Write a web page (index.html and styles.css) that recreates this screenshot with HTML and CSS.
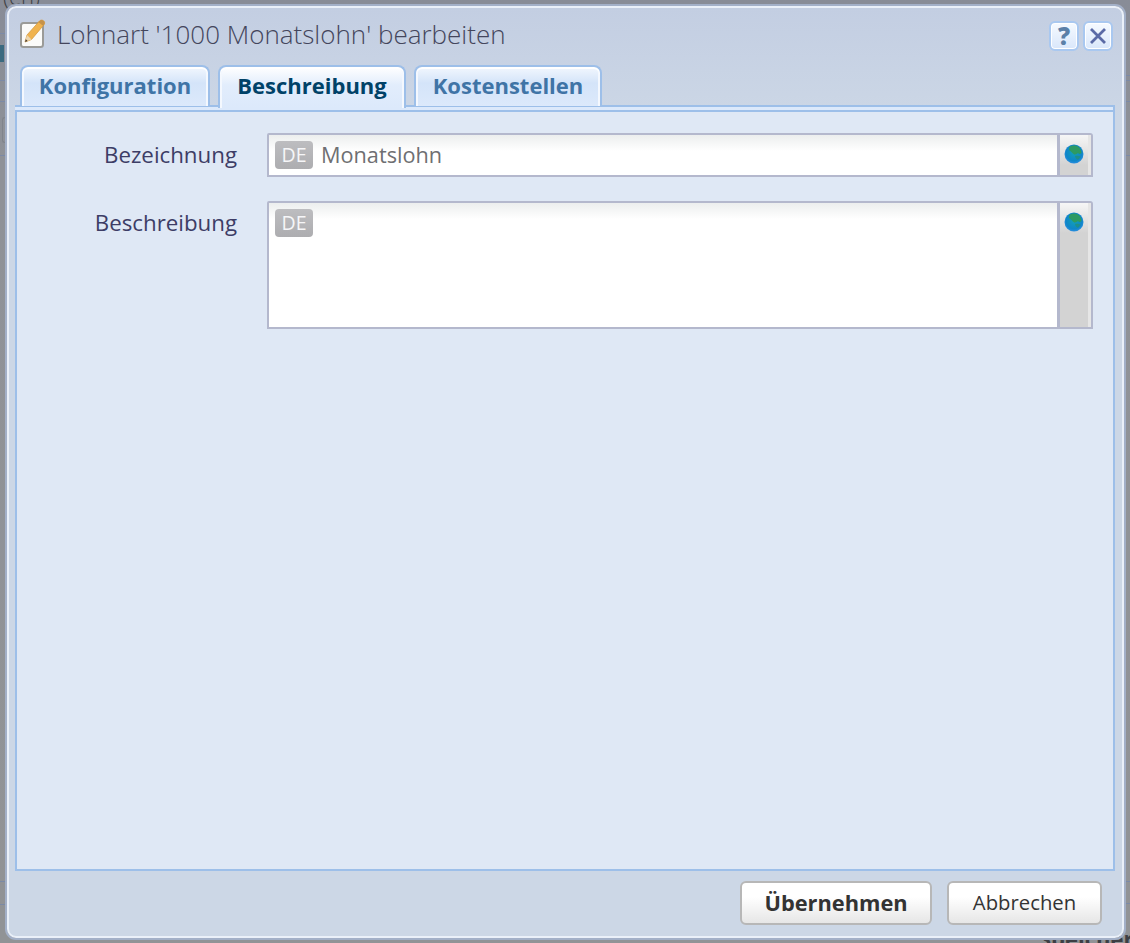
FILE: index.html
```html
<!DOCTYPE html>
<html lang="de">
<head>
<meta charset="utf-8">
<title>Lohnart bearbeiten</title>
<link rel="stylesheet" href="styles.css">
</head>
<body>
<div class="backdrop" aria-hidden="true">
  <span class="bg-text bg-top">(en)</span>
  <span class="bg-text bg-bottom">Speicher</span>
  <i class="bg-chip"></i><i class="bg-box"></i>
  <i class="bg-line l1"></i><i class="bg-line l2"></i><i class="bg-line l3"></i><i class="bg-line l4"></i><i class="bg-line l5"></i><i class="bg-line l6"></i>
  <i class="bg-line r1"></i><i class="bg-line r2"></i><i class="bg-line r3"></i><i class="bg-line r4"></i><i class="bg-line r5"></i><i class="bg-line r6"></i>
</div>
<div class="dialog">
  <header class="titlebar">
    <svg class="title-icon" width="28" height="32" viewBox="0 0 28 32">
      <rect x="2" y="6" width="22" height="24" rx="2.500" fill="#fbfbf9" stroke="#9b9b98" stroke-width="2"/>
      <path d="M6 25l2-7L20.500 4c1-1 2.600-1.300 4-.2 1.300 1 1.500 2.700.5 3.900L12.500 22.500z" fill="#f0b34e" stroke="#d59a40" stroke-width=".8"/>
      <path d="M20.500 4c1-1 2.600-1.300 4-.2 1.300 1 1.500 2.700.5 3.900l-1 1.100-4.800-3.700z" fill="#c6924a"/>
      <path d="M6 25l2-7 4.500 4.500z" fill="#ecd7b0"/>
      <path d="M6 25l.8-2.800 1.900 1.700z" fill="#4a3a2a"/>
    </svg>
    <h1 class="title">Lohnart '1000 Monatslohn' bearbeiten</h1>
    <div class="title-buttons">
      <button class="tool-btn tool-help" type="button">?</button>
      <button class="tool-btn" type="button" aria-label="Schließen">
        <svg width="20" height="20" viewBox="0 0 20 20"><path d="M3 3l14 14M17 3L3 17" stroke="#5a6aa6" stroke-width="2.800" fill="none"/></svg>
      </button>
    </div>
  </header>
  <nav class="tabs">
    <span class="tab">Konfiguration</span>
    <span class="tab tab-active">Beschreibung</span>
    <span class="tab">Kostenstellen</span>
  </nav>
  <main class="panel">
    <div class="panel-body">
      <div class="row">
        <label class="label">Bezeichnung</label>
        <div class="field field-single">
          <div class="field-input"><span class="lang">DE</span><span class="value">Monatslohn</span></div>
          <div class="field-side">
            <svg class="globe" width="20" height="20" viewBox="0 0 20 20"><use href="#globe"/></svg>
          </div>
        </div>
      </div>
      <div class="row">
        <label class="label">Beschreibung</label>
        <div class="field field-multi">
          <div class="field-input"><span class="lang">DE</span></div>
          <div class="field-side">
            <svg class="globe" width="20" height="20" viewBox="0 0 20 20"><use href="#globe"/></svg>
          </div>
        </div>
      </div>
    </div>
  </main>
  <footer class="actions">
    <button class="btn btn-primary" type="button">Übernehmen</button>
    <button class="btn btn-cancel" type="button">Abbrechen</button>
  </footer>
</div>
<svg width="0" height="0" class="defs">
  <defs>
    <radialGradient id="sea" cx="50%" cy="45%" r="55%">
      <stop offset="0" stop-color="#12a0b8"/><stop offset=".75" stop-color="#0f86c8"/><stop offset="1" stop-color="#2a8ee0"/>
    </radialGradient>
    <symbol id="globe" viewBox="0 0 20 20">
      <circle cx="10" cy="10" r="9.500" fill="url(#sea)"/>
      <path d="M6 2.500c3-1.500 7-1 9 .8 1.700 1.500 2.500 3.700 2.500 5.700-1.500 1-2 1.500-3.500 0-1.500 1.500-3 2-4.500 1C8 9 7 7 5 6c0-1.500.2-2.700 1-3.500z" fill="#2d9a62"/>
      <path d="M11 12c2-.5 4-.2 5.500.5-.6 1.600-1.800 2.700-3 3.200-1.300-.8-2.300-2-2.500-3.700z" fill="#1f8f8a"/>
    </symbol>
  </defs>
</svg>
</body>
</html>
```

FILE: styles.css
```css
* { box-sizing: border-box; }
html, body { margin: 0; padding: 0; }
body {
  position: relative;
  width: 1130px;
  height: 943px;
  overflow: hidden;
  background: linear-gradient(#888c97 0, #8f9298 160px, #919396 100%);
  font-family: "Open Sans", "Noto Sans", sans-serif;
  padding: 6px 6px 5px 7px;
}
.defs { position: absolute; }
.backdrop { position: absolute; inset: 0; }
.bg-text { position: absolute; color: #3d3f44; font-size: 22px; }
.bg-top { left: 3px; top: -19px; font-weight: 300; }
.bg-bottom { left: 1039px; top: 923px; font-weight: 700; }
.bg-chip { position: absolute; left: 0; top: 45px; width: 4px; height: 17px; background: #3b6a80; }
.bg-box { position: absolute; left: 2px; top: 117px; width: 3px; height: 26px; border: 1px solid #80848c; border-right: 0; border-radius: 3px 0 0 3px; }
.bg-line { position: absolute; height: 1px; background: #7c8aa6; }
.l1, .l2, .l3, .l4, .l5, .l6 { left: 0; width: 6px; }
.r1, .r2, .r3, .r4, .r5, .r6 { left: 1125px; width: 5px; }
.l1 { top: 33px; } .l2 { top: 80px; } .l3 { top: 101px; } .l4 { top: 155px; } .l5 { top: 881px; } .l6 { top: 904px; }
.r1 { top: 75px; } .r2 { top: 80px; } .r3 { top: 101px; } .r4 { top: 155px; } .r5 { top: 881px; } .r6 { top: 903px; }

.dialog {
  position: relative;
  height: 932px;
  display: flex;
  flex-direction: column;
  padding: 0 8px;
  border: 2px solid #eaf0f9;
  border-radius: 9px;
  box-shadow: 0 0 0 2px #a3b0c8;
  background: linear-gradient(#c3cee2 0, #ccd7e6 110px, #ccd7e6 100%);
}
.titlebar {
  height: 57px;
  flex: none;
  display: flex;
  align-items: flex-start;
}
.title-icon { margin: 9px 0 0 2px; flex: none; }
.title {
  margin: 8px 0 0 10px;
  font-size: 26px;
  line-height: 36px;
  font-weight: 300;
  color: #44465c;
  white-space: nowrap;
}
.title-buttons { margin: 13px 1px 0 auto; display: flex; gap: 4px; }
.tool-btn {
  width: 30px;
  height: 30px;
  padding: 0;
  display: flex;
  align-items: center;
  justify-content: center;
  border: 2px solid #a9c8f0;
  border-radius: 6px;
  background: linear-gradient(#f6faff, #d9e7fb);
  box-shadow: inset 0 0 0 1px #ffffff;
  font-family: "Open Sans", sans-serif;
  font-weight: 800;
  font-size: 24px;
  line-height: 1;
  color: #5b80a8;
}

.tabs {
  flex: none;
  height: 41px;
  display: flex;
  gap: 8px;
  padding-left: 3px;
  position: relative;
  z-index: 1;
}
.tab {
  width: 190px;
  height: 41px;
  border: 2px solid #9dbfe9;
  border-bottom: 0;
  border-radius: 8px 8px 0 0;
  box-shadow: inset 0 2px 0 #ffffff, inset 2px 0 0 #f4f8fe, inset -2px 0 0 #f4f8fe;
  background: linear-gradient(#f2f7fe 0, #d4e4f9 16px, #dce9fb 100%);
  display: flex;
  align-items: center;
  justify-content: center;
  font-size: 22px;
  font-weight: 700;
  color: #3f74a6;
  padding-bottom: 3px;
}
.tab-active {
  width: 188px;
  background: linear-gradient(#ffffff 0, #e2edfc 18px, #dce9fb 100%);
  color: #004268;
  height: 43px;
  margin-bottom: -2px;
  padding-bottom: 5px;
}
.tab:last-child { width: 188px; }

.panel {
  flex: 1;
  margin: -1px -1px 0 -2px;
  border: 2px solid #9dbfe9;
  border-bottom: 0;
  border-left: 0;
  padding-top: 3px;
  background: #dce9fb;
  display: flex;
  min-height: 0;
}
.panel-body {
  flex: 1;
  border: 2px solid #9dbfe9;
  border-right: 0;
  background: #dfe8f5;
  padding: 21px 20px 0 0;
  display: flex;
  flex-direction: column;
  gap: 24px;
}
.row { display: flex; align-items: flex-start; }
.label {
  width: 220px;
  flex: none;
  text-align: right;
  font-size: 22.300px;
  line-height: 44px;
  color: #3d3d66;
}
.field {
  margin-left: 30px;
  flex: 1;
  display: flex;
  border: 2px solid #b4b8cd;
  background: #fff;
  border-radius: 2px 3px 0 0;
}
.field-single { height: 44px; }
.field-multi { height: 128px; }
.field-input {
  flex: 1;
  display: flex;
  align-items: flex-start;
  padding: 6px 0 0 6px;
  background: linear-gradient(#eceeee 0, #ffffff 16px);
}
.lang {
  width: 38px;
  height: 28px;
  border-radius: 4px;
  background: linear-gradient(#bdbdc0, #adadb0);
  color: #f6f6f8;
  font-size: 19.500px;
  line-height: 28px;
  text-align: center;
}
.value {
  margin-left: 8px;
  font-size: 21.700px;
  line-height: 28px;
  color: #6f6f72;
}
.field-side {
  width: 34px;
  flex: none;
  border-left: 3px solid #b4b8cd;
  background: linear-gradient(#f6f6f6 0, #d3d3d3 30px, #d3d3d3 100%);
  box-shadow: inset -3px 0 0 #e6e6e6;
  padding: 9px 0 0 4px;
}
.globe { display: block; }

.actions {
  flex: none;
  height: 65px;
  display: flex;
  justify-content: flex-end;
  gap: 15px;
  padding: 10px 12px 0 0;
}
.btn {
  height: 44px;
  border: 2px solid #b7b7b7;
  border-radius: 6px;
  background: linear-gradient(#ffffff 35%, #e6e6e6 100%);
  font-family: "Open Sans", sans-serif;
  font-size: 21.800px;
  color: #333;
  padding: 0 0 2px;
}
.btn-primary { width: 192px; font-weight: 700; }
.btn-cancel { width: 155px; font-size: 20.300px; }
```
